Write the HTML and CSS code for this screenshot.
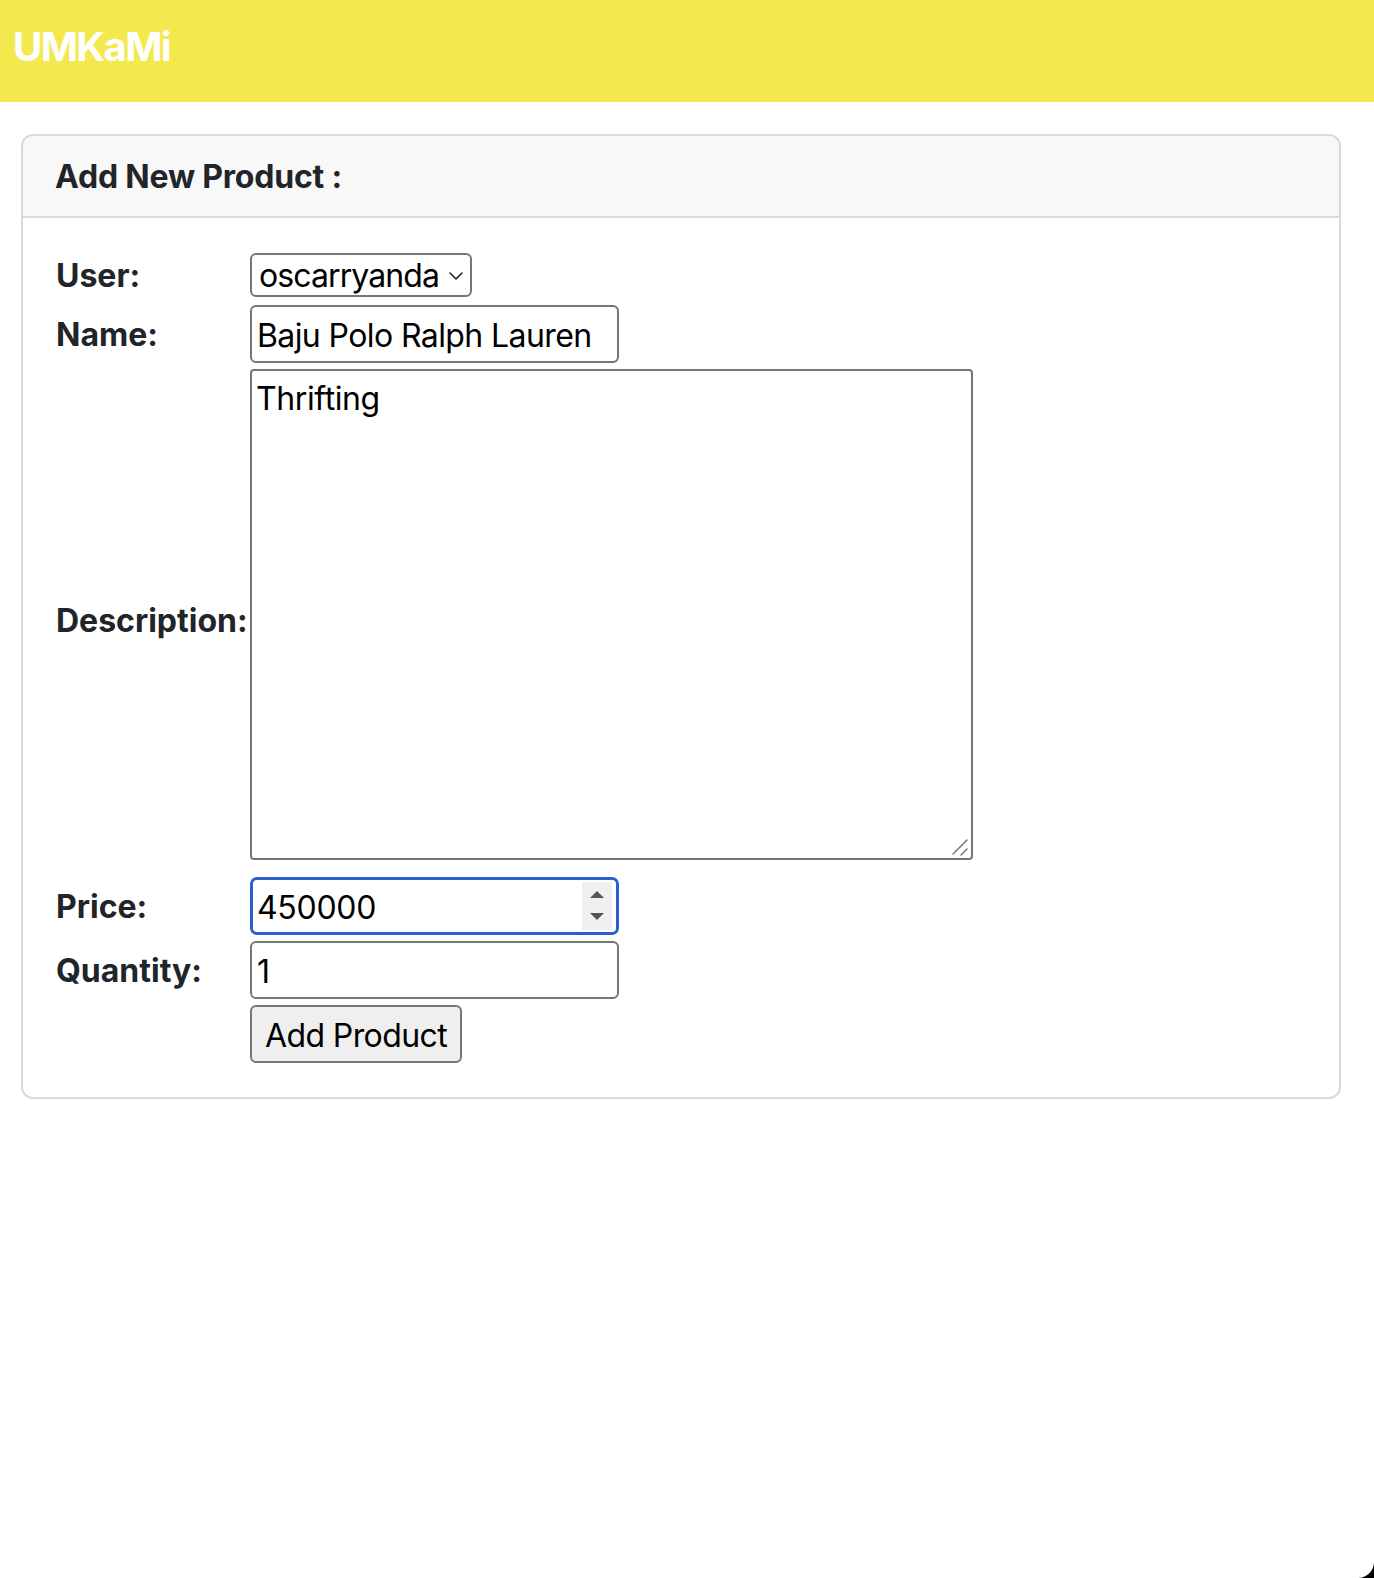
FILE: index.html
```html
<!DOCTYPE html>
<html lang="en">
<head>
<meta charset="utf-8">
<title>UMKaMi - Add Product</title>
<link rel="stylesheet" href="styles.css">
</head>
<body>
<nav class="navbar"><span class="brand">UMKaMi</span></nav>
<main class="page">
  <section class="card">
    <div class="card-header">Add New Product :</div>
    <div class="card-body">
      <form class="form-grid">
        <label class="lbl" for="user">User:</label>
        <div class="ctl">
          <span class="select-wrap">
            <select id="user" class="select"><option>oscarryanda</option></select>
            <svg class="chev" width="14" height="8" viewBox="0 0 14 8"><path d="M1 1 L7 7 L13 1" fill="none" stroke="#222" stroke-width="1.6" stroke-linecap="round" stroke-linejoin="round"/></svg>
          </span>
        </div>

        <label class="lbl" for="name">Name:</label>
        <div class="ctl"><input id="name" class="field" type="text" value="Baju Polo Ralph Lauren"></div>

        <label class="lbl" for="desc">Description:</label>
        <div class="ctl">
          <span class="area-wrap">
            <textarea id="desc" class="area">Thrifting</textarea>
            <svg class="grip" width="20" height="20" viewBox="0 0 20 20"><path d="M2 16 L16 2 M10 17 L16 11" stroke="#767676" stroke-width="1.5" stroke-linecap="round"/></svg>
          </span>
        </div>

        <label class="lbl" for="price">Price:</label>
        <div class="ctl">
          <div class="num-field">
            <input id="price" class="num-input" type="text" value="450000">
            <span class="spin">
              <svg width="30" height="48" viewBox="0 0 30 48"><polygon points="8,16 22,16 15,9" fill="#555"/><polygon points="8,31 22,31 15,38" fill="#555"/></svg>
            </span>
          </div>
        </div>

        <label class="lbl" for="qty">Quantity:</label>
        <div class="ctl"><input id="qty" class="field" type="text" value="1"></div>

        <span class="lbl"></span>
        <div class="ctl"><button type="button" class="btn">Add Product</button></div>
      </form>
    </div>
  </section>
</main>
<svg class="win-corner" width="16" height="16" viewBox="0 0 16 16"><path d="M0 16 A16 16 0 0 0 16 0 L16 16 Z" fill="#000"/></svg>
</body>
</html>
```
FILE: styles.css
```css
html, body {
  margin: 0;
  padding: 0;
  background: #ffffff;
}
body {
  position: relative;
  font-family: Inter, "Noto Sans", sans-serif;
  color: #212529;
  width: 1374px;
  height: 1578px;
  overflow: hidden;
}
.navbar {
  box-sizing: border-box;
  height: 102px;
  background: #f3e94e;
  padding: 23px 0 0 13px;
}
.brand {
  display: block;
  font-size: 40px;
  line-height: 48px;
  font-weight: 700;
  letter-spacing: -1.6px;
  color: #ffffff;
}
.page {
  padding: 32px 33px 0 21px;
}
.card {
  border: 2px solid #d8d9d9;
  border-radius: 12px;
  background: #fff;
}
.card-header {
  background: #f8f8f8;
  border-bottom: 2px solid #d8d9d9;
  border-radius: 10px 10px 0 0;
  padding: 17px 32px 15px;
  font-size: 32px;
  line-height: 48px;
  font-weight: 700;
  letter-spacing: -0.2px;
}
.card-body {
  padding: 33px 32px 34px;
}
.form-grid {
  display: grid;
  grid-template-columns: 195px auto;
  row-gap: 6px;
  align-items: center;
  justify-items: start;
}
.lbl {
  box-sizing: border-box;
  font-size: 32px;
  line-height: 46px;
  font-weight: 700;
  white-space: nowrap;
  min-height: 48px;
  padding-left: 1px;
  padding-top: 2px;
}
.ctl {
  display: flex;
}
.select-wrap {
  position: relative;
  display: block;
}
.select {
  -webkit-appearance: none;
  appearance: none;
  box-sizing: border-box;
  width: 222px;
  height: 44px;
  border: 2px solid #767676;
  border-radius: 6px;
  background: #fff;
  color: #000;
  font-family: Inter, sans-serif;
  font-size: 32px;
  letter-spacing: -0.9px;
  padding: 0 28px 0 7px;
  margin: 0;
}
.chev {
  position: absolute;
  right: 9px;
  top: 19px;
  pointer-events: none;
}
.field {
  box-sizing: border-box;
  width: 369px;
  height: 58px;
  border: 2px solid #767676;
  border-radius: 6px;
  padding: 2px 4px 0 5px;
  margin: 0;
  font-family: Inter, sans-serif;
  font-size: 32px;
  letter-spacing: -0.6px;
  color: #000;
  background: #fff;
}
.area-wrap {
  position: relative;
  display: block;
}
.area {
  display: block;
  box-sizing: border-box;
  width: 723px;
  height: 491px;
  border: 2px solid #767676;
  border-radius: 4px;
  padding: 8px 4px 4px;
  margin: 0 0 11px;
  font-family: Inter, sans-serif;
  font-size: 32px;
  letter-spacing: -0.4px;
  color: #000;
  background: #fff;
  resize: none;
}
.grip {
  position: absolute;
  right: 2px;
  bottom: 13px;
  pointer-events: none;
}
.num-field {
  box-sizing: border-box;
  display: flex;
  align-items: stretch;
  width: 369px;
  height: 58px;
  border: 3px solid #2a5fcc;
  border-radius: 7px;
  background: #fff;
}
.num-input {
  flex: 1;
  min-width: 0;
  border: none;
  outline: none;
  padding: 2px 4px 0;
  margin: 0;
  font-family: Inter, sans-serif;
  font-size: 32px;
  letter-spacing: -0.3px;
  color: #000;
  background: transparent;
}
.spin {
  width: 30px;
  margin: 2px 4px 2px 0;
  background: #f0f0f0;
  display: flex;
}
.btn {
  box-sizing: border-box;
  width: 212px;
  height: 58px;
  border: 2px solid #767676;
  border-radius: 6px;
  background: #efefef;
  color: #000;
  font-family: Inter, sans-serif;
  font-size: 32px;
  letter-spacing: -0.6px;
  padding: 2px 10px 0;
  margin: 0;
  white-space: nowrap;
}
.win-corner {
  position: absolute;
  right: 0;
  bottom: 0;
}
```
